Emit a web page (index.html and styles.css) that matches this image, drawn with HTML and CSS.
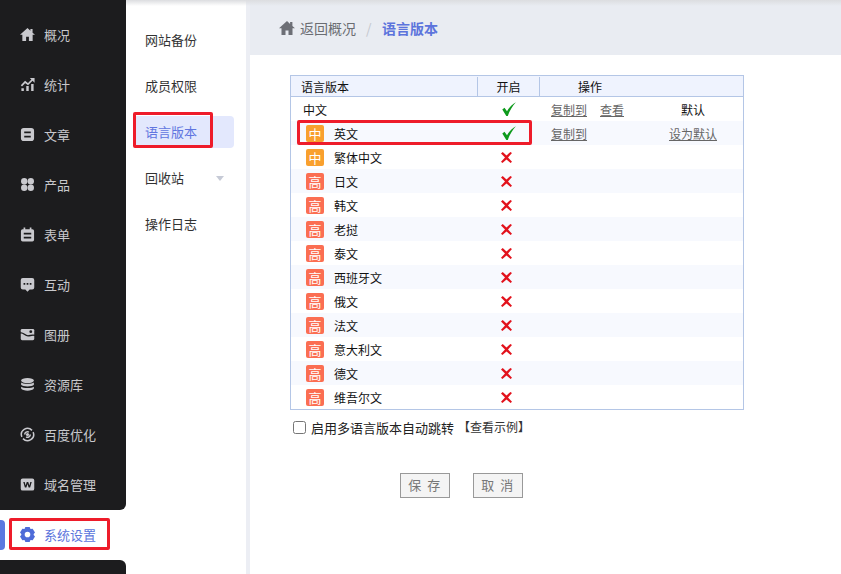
FILE: index.html
```html
<!DOCTYPE html>
<html lang="zh-CN">
<head>
<meta charset="utf-8">
<title>语言版本</title>
<link rel="stylesheet" href="styles.css">
</head>
<body>
<div class="app">
  <aside class="rail">
    <nav class="rail-block rail-main">
      <a class="rail-item"><svg class="ri" viewBox="0 0 16 16"><path d="M8 1 0 8.300h2.500V15h4V10.500h3V15h4V8.300H16L13.400 6V2h-2.300v1.900z"/></svg>概况</a>
      <a class="rail-item"><svg class="ri" viewBox="0 0 16 16"><path d="M1.500 15v-3h2.600v3zM6.700 15V9.500h2.600V15zM11.900 15V7.500h2.600V15z"/><path class="wave" d="M1.500 9.500 5.500 5.300l3 2.400L13.800 2.300"/><path d="M10.500 1h5v5z"/></svg>统计</a>
      <a class="rail-item"><svg class="ri" viewBox="0 0 16 16"><path fill-rule="evenodd" d="M4 1h8a3 3 0 0 1 3 3v8a3 3 0 0 1-3 3H4a3 3 0 0 1-3-3V4a3 3 0 0 1 3-3zM4.500 4.700v2h7v-2zM4.500 9.300v2h7v-2z"/></svg>文章</a>
      <a class="rail-item"><svg class="ri" viewBox="0 0 16 16"><circle cx="4.500" cy="4.500" r="3.400"/><circle cx="11.500" cy="4.500" r="3.400"/><circle cx="4.500" cy="11.500" r="3.400"/><circle cx="11.500" cy="11.500" r="3.400"/></svg>产品</a>
      <a class="rail-item"><svg class="ri" viewBox="0 0 16 16"><path fill-rule="evenodd" d="M3.800 0.500h1.800v2h4.800v-2h1.800v2h1a1.800 1.800 0 0 1 1.800 1.800v9.400a1.800 1.800 0 0 1-1.800 1.800H2.800A1.800 1.800 0 0 1 1 13.700V4.300a1.800 1.800 0 0 1 1.800-1.800h1zM4 6.200v1.900h8V6.200zM4 10.400v1.900h8v-1.900z"/></svg>表单</a>
      <a class="rail-item"><svg class="ri" viewBox="0 0 16 16"><path fill-rule="evenodd" d="M3 1h10a2.200 2.200 0 0 1 2.200 2.200v8A2.200 2.200 0 0 1 13 13.400h-2.700L8 15.800l-2.300-2.400H3a2.200 2.200 0 0 1-2.200-2.200v-8A2.200 2.200 0 0 1 3 1zM3.800 6.300v2h1.800v-2zM7.100 6.300v2h1.800v-2zM10.400 6.300v2h1.800v-2z"/></svg>互动</a>
      <a class="rail-item"><svg class="ri" viewBox="0 0 16 16"><rect x="0.800" y="2" width="14.400" height="12" rx="1.500"/><path class="cut" d="M0 6.500C3.500 5 5 9.500 8.500 9.500 11 9.500 13 7.800 16 9"/><circle class="dot" cx="11.500" cy="5" r="1.500"/></svg>图册</a>
      <a class="rail-item"><svg class="ri" viewBox="0 0 16 16"><ellipse cx="8" cy="3.800" rx="6.800" ry="2.800"/><path d="M1.200 5.900c1.500 2 12.100 2 13.600 0v2.400c-1.500 2.400-12.100 2.400-13.600 0zM1.200 10.300c1.500 2 12.100 2 13.600 0v2c-1.500 3-12.100 3-13.600 0z"/></svg>资源库</a>
      <a class="rail-item"><svg class="ri" viewBox="0 0 16 16"><circle cx="8" cy="8" r="1.700"/><path class="ln" d="M2 10.500A6.500 6.500 0 0 1 12.800 3.600M14 5.500A6.500 6.500 0 0 1 3.200 12.400M5 8a3 3 0 0 1 4.500-2.600M11 8a3 3 0 0 1-4.500 2.600"/></svg>百度优化</a>
      <a class="rail-item"><svg class="ri" viewBox="0 0 16 16"><path fill-rule="evenodd" d="M2.800 1.500h10.400a2 2 0 0 1 2 2v9a2 2 0 0 1-2 2H2.800a2 2 0 0 1-2-2v-9a2 2 0 0 1 2-2zM3.500 5.200l1.700 6h1.600L8 7.500l1.200 3.700h1.600l1.700-6H11l-1 3.800L8.800 5.200H7.200L6 9 5 5.200z"/></svg>域名管理</a>
    </nav>
    <div class="rail-active">
      <span class="rail-mark"></span>
      <a class="rail-item current"><svg class="ri" viewBox="0 0 16 16"><path fill-rule="evenodd" d="M5.700 0h4.600l.9 2.100 2.300-.3L16 5.800l-1.400 1.700v1l1.400 1.700-2.500 4-2.300-.3-.9 2.100H5.700l-.9-2.100-2.300.3-2.500-4 1.400-1.700v-1L0 5.800l2.500-4 2.300.3zM8 5a3 3 0 1 0 0 6 3 3 0 0 0 0-6z"/></svg>系统设置</a>
      <span class="mark-box mark-rail"></span>
    </div>
    <div class="rail-block rail-rest"></div>
  </aside>

  <div class="shell">
    <nav class="subnav">
      <a class="sub-item">网站备份</a>
      <a class="sub-item">成员权限</a>
      <a class="sub-item on">语言版本<span class="mark-box mark-sub"></span></a>
      <a class="sub-item">回收站<span class="caret"></span></a>
      <a class="sub-item">操作日志</a>
    </nav>
    <main class="main">
      <header class="crumbs">
        <svg class="home" viewBox="0 0 16 16"><path d="M8 1 0 8.300h2.500V15h4V10.500h3V15h4V8.300H16L13.400 6V2h-2.300v1.900z"/></svg>
        <span class="back">返回概况</span>
        <span class="sep">/</span>
        <span class="here">语言版本</span>
      </header>
      <section class="content">
        <div class="table-wrap">
          <table class="langs">
            <colgroup><col class="c1"><col class="c2"><col class="c3"><col class="c4"><col class="c5"></colgroup>
            <thead>
              <tr><th class="t-name"><span>语言版本</span></th><th class="t-on"><span>开启</span></th><th colspan="3" class="t-op"><span>操作</span></th></tr>
            </thead>
            <tbody>
              <tr><td><span class="plain">中文</span></td><td class="st"><svg class="ok" viewBox="0 0 14 14"><path d="M0.300 7.500 2.500 5.800 5 9.200C7 5.800 10 2.500 13.900 0.300 10.500 4 7.800 8.500 5.800 13.900H4.300z"/></svg></td><td><a class="lnk">复制到</a></td><td><a class="lnk">查看</a></td><td class="dft">默认</td></tr>
              <tr><td><span class="tag mid">中</span><span class="nm">英文</span></td><td class="st"><svg class="ok" viewBox="0 0 14 14"><path d="M0.300 7.500 2.500 5.800 5 9.200C7 5.800 10 2.500 13.900 0.300 10.500 4 7.800 8.500 5.800 13.900H4.300z"/></svg></td><td><a class="lnk">复制到</a></td><td></td><td class="dft"><a class="lnk">设为默认</a></td></tr>
              <tr><td><span class="tag mid">中</span><span class="nm">繁体中文</span></td><td class="st off"><svg class="no" viewBox="0 0 11 11"><path d="M0 1.500 1.700 0 5.500 3.600 9.300 0 11 1.100 7 5.500 11 9.700 9.600 11 5.500 7.400 1.400 11 0 9.700 4 5.500z"/></svg></td><td></td><td></td><td></td></tr>
              <tr><td><span class="tag high">高</span><span class="nm">日文</span></td><td class="st off"><svg class="no" viewBox="0 0 11 11"><path d="M0 1.500 1.700 0 5.500 3.600 9.300 0 11 1.100 7 5.500 11 9.700 9.600 11 5.500 7.400 1.400 11 0 9.700 4 5.500z"/></svg></td><td></td><td></td><td></td></tr>
              <tr><td><span class="tag high">高</span><span class="nm">韩文</span></td><td class="st off"><svg class="no" viewBox="0 0 11 11"><path d="M0 1.500 1.700 0 5.500 3.600 9.300 0 11 1.100 7 5.500 11 9.700 9.600 11 5.500 7.400 1.400 11 0 9.700 4 5.500z"/></svg></td><td></td><td></td><td></td></tr>
              <tr><td><span class="tag high">高</span><span class="nm">老挝</span></td><td class="st off"><svg class="no" viewBox="0 0 11 11"><path d="M0 1.500 1.700 0 5.500 3.600 9.300 0 11 1.100 7 5.500 11 9.700 9.600 11 5.500 7.400 1.400 11 0 9.700 4 5.500z"/></svg></td><td></td><td></td><td></td></tr>
              <tr><td><span class="tag high">高</span><span class="nm">泰文</span></td><td class="st off"><svg class="no" viewBox="0 0 11 11"><path d="M0 1.500 1.700 0 5.500 3.600 9.300 0 11 1.100 7 5.500 11 9.700 9.600 11 5.500 7.400 1.400 11 0 9.700 4 5.500z"/></svg></td><td></td><td></td><td></td></tr>
              <tr><td><span class="tag high">高</span><span class="nm">西班牙文</span></td><td class="st off"><svg class="no" viewBox="0 0 11 11"><path d="M0 1.500 1.700 0 5.500 3.600 9.300 0 11 1.100 7 5.500 11 9.700 9.600 11 5.500 7.400 1.400 11 0 9.700 4 5.500z"/></svg></td><td></td><td></td><td></td></tr>
              <tr><td><span class="tag high">高</span><span class="nm">俄文</span></td><td class="st off"><svg class="no" viewBox="0 0 11 11"><path d="M0 1.500 1.700 0 5.500 3.600 9.300 0 11 1.100 7 5.500 11 9.700 9.600 11 5.500 7.400 1.400 11 0 9.700 4 5.500z"/></svg></td><td></td><td></td><td></td></tr>
              <tr><td><span class="tag high">高</span><span class="nm">法文</span></td><td class="st off"><svg class="no" viewBox="0 0 11 11"><path d="M0 1.500 1.700 0 5.500 3.600 9.300 0 11 1.100 7 5.500 11 9.700 9.600 11 5.500 7.400 1.400 11 0 9.700 4 5.500z"/></svg></td><td></td><td></td><td></td></tr>
              <tr><td><span class="tag high">高</span><span class="nm">意大利文</span></td><td class="st off"><svg class="no" viewBox="0 0 11 11"><path d="M0 1.500 1.700 0 5.500 3.600 9.300 0 11 1.100 7 5.500 11 9.700 9.600 11 5.500 7.400 1.400 11 0 9.700 4 5.500z"/></svg></td><td></td><td></td><td></td></tr>
              <tr><td><span class="tag high">高</span><span class="nm">德文</span></td><td class="st off"><svg class="no" viewBox="0 0 11 11"><path d="M0 1.500 1.700 0 5.500 3.600 9.300 0 11 1.100 7 5.500 11 9.700 9.600 11 5.500 7.400 1.400 11 0 9.700 4 5.500z"/></svg></td><td></td><td></td><td></td></tr>
              <tr><td><span class="tag high">高</span><span class="nm">维吾尔文</span></td><td class="st off"><svg class="no" viewBox="0 0 11 11"><path d="M0 1.500 1.700 0 5.500 3.600 9.300 0 11 1.100 7 5.500 11 9.700 9.600 11 5.500 7.400 1.400 11 0 9.700 4 5.500z"/></svg></td><td></td><td></td><td></td></tr>
            </tbody>
          </table>
          <span class="mark-box mark-row"></span>
        </div>
        <div class="jump">
          <span class="check"></span>
          <span class="jump-text">启用多语言版本自动跳转</span>
          <a class="sample">【查看示例】</a>
        </div>
        <div class="actions">
          <button class="btn" type="button">保 存</button>
          <button class="btn" type="button">取 消</button>
        </div>
      </section>
    </main>
  </div>
</div>
</body>
</html>
```
FILE: styles.css
```css
* { box-sizing: border-box; }
html, body { margin: 0; height: 100%; overflow: hidden; background: #fff; }
body { font-family: "Noto Sans CJK SC", "Liberation Sans", sans-serif; color: #222; }
a { display: block; }

.app { display: flex; height: 574px; }

.rail { width: 126px; flex: none; display: flex; flex-direction: column; }
.rail-block { background: #1c1c1e; }
.rail-main { height: 510px; padding-top: 10px; border-bottom-right-radius: 6px; }
.rail-rest { flex: 1; border-top-right-radius: 6px; }
.rail-active { position: relative; height: 50px; background: #fff; display: flex; align-items: flex-start; }
.rail-item { height: 50px; display: flex; align-items: center; gap: 9px; padding: 0 0 2px 20px; font-size: 13px; color: #c8c8cc; line-height: 1; }
.ri { width: 15px; height: 15px; fill: #c9c9ce; flex: none; }
.ri .ln { fill: none; stroke: #c9c9ce; stroke-width: 1.600; }
.ri .wave { fill: none; stroke: #c9c9ce; stroke-width: 1.800; }
.ri .cut { fill: none; stroke: #1c1c1e; stroke-width: 1.500; }
.ri .dot { fill: #1c1c1e; }
.rail-item.current { color: #5b74dc; width: 126px; }
.current .ri { fill: #4e6bd8; }
.rail-mark { position: absolute; left: 0; top: 10px; width: 5px; height: 30px; background: #5b78e0; border-radius: 0 4px 4px 0; }

.mark-box { position: absolute; border: 3px solid #ee1c2a; border-radius: 2px; pointer-events: none; }
.mark-rail { left: 9px; top: 8px; width: 101px; height: 32px; }
.mark-sub { left: -1px; top: -4px; width: 80px; height: 36px; }
.mark-row { left: 7px; top: 45px; width: 235px; height: 25px; }

.shell { flex: 1; display: flex; min-width: 0; position: relative; }
.shell::before { content: ""; position: absolute; left: 0; right: 0; top: 0; height: 6px; background: linear-gradient(#dcdde0, rgba(230,232,236,0)); z-index: 2; }

.subnav { width: 124px; flex: none; padding: 24px 12px 0 8px; background: #fff; border-right: 4px solid #eceef4; }
.sub-item { position: relative; height: 32px; margin-bottom: 14px; padding-left: 11px; font-size: 13px; line-height: 32px; color: #333; border-radius: 4px; width: 100px; }
.sub-item.on { background: #e3e8fd; color: #6176e0; }
.caret { position: absolute; right: 10px; top: 14px; border: 4px solid transparent; border-top: 5px solid #c6cad6; border-bottom: 0; }

.main { flex: 1; min-width: 0; }
.crumbs { height: 55px; background: #e9ecf2; display: flex; align-items: center; padding: 0 0 0 30px; font-size: 14px; line-height: 1; }
.home { width: 16px; height: 16px; fill: #6d6f76; margin: 0 5px 0 -1px; }
.back { color: #6b6d72; }
.sep { color: #c5c8cf; margin: 0 10px; width: 6px; }
.here { color: #5c74dc; font-weight: 700; }

.content { padding: 20px 0 0 40px; }
.table-wrap { position: relative; width: 454px; }
.langs { width: 454px; height: 335px; table-layout: fixed; border-collapse: separate; border-spacing: 0; border: 1px solid #b4c6e6; font-size: 12px; color: #111; }
.c1 { width: 186px; } .c2 { width: 63px; } .c3 { width: 60px; } .c4 { width: 56px; } .c5 { width: 87px; }
.langs th { height: 21px; padding: 2px 0 0; font-weight: 400; background: #eff3fe; border-bottom: 1px solid #b4c6e6; text-align: center; line-height: 1; }
.t-name { text-align: left !important; padding-left: 10px !important; }
.t-on span { display: block; height: 19px; margin-top: -2px; line-height: 20px; border-left: 1px solid #b4c6e6; border-right: 1px solid #b4c6e6; }
.t-op { text-align: left !important; padding-left: 38px !important; }
.langs td { height: 24px; padding: 2px 0 0; vertical-align: middle; line-height: 1; }
.langs td:first-child { padding-left: 15px; white-space: nowrap; }
.langs tbody tr:nth-child(even) { background: #f7f9fe; }
.langs td.st { text-align: center; padding-top: 0; padding-left: 0; }
.langs td.off { padding: 0 4px 2px 0; }
.langs td:nth-child(3) { padding-left: 11px; }
.langs .dft { text-align: center; padding-right: 13px; }
.plain { margin-left: -3px; display: inline-block; }
.tag { display: inline-flex; width: 18px; height: 17px; margin-top: -2px; border-radius: 2px; color: #fff; font-size: 13px; align-items: center; justify-content: center; vertical-align: middle; }
.tag.mid { background: #f9a02e; }
.tag.high { background: #fb6e52; }
.nm { margin-left: 10px; vertical-align: middle; }
.lnk { display: inline; color: #666; text-decoration: underline; }
.ok { width: 14px; height: 14px; fill: #0e9a1c; vertical-align: middle; }
.no { width: 11px; height: 11px; fill: #e2121c; vertical-align: middle; }

.jump { display: flex; align-items: center; height: 16px; margin: 9px 0 0 3px; font-size: 13px; line-height: 1; color: #222; }
.check { width: 13px; height: 13px; border: 1px solid #767676; border-radius: 2.500px; background: #fff; margin-right: 5px; }
.jump-text { width: 147px; }
.sample { font-size: 12px; color: #333; }

.actions { display: flex; gap: 23px; margin: 38px 0 0 110px; }
.btn { width: 50px; height: 25px; padding: 0 0 2px; border: 1px solid #999; background: #f4f4f4; color: #777; font: 13px/1 "Noto Sans CJK SC", "Liberation Sans", sans-serif; letter-spacing: 1.500px; }
```
